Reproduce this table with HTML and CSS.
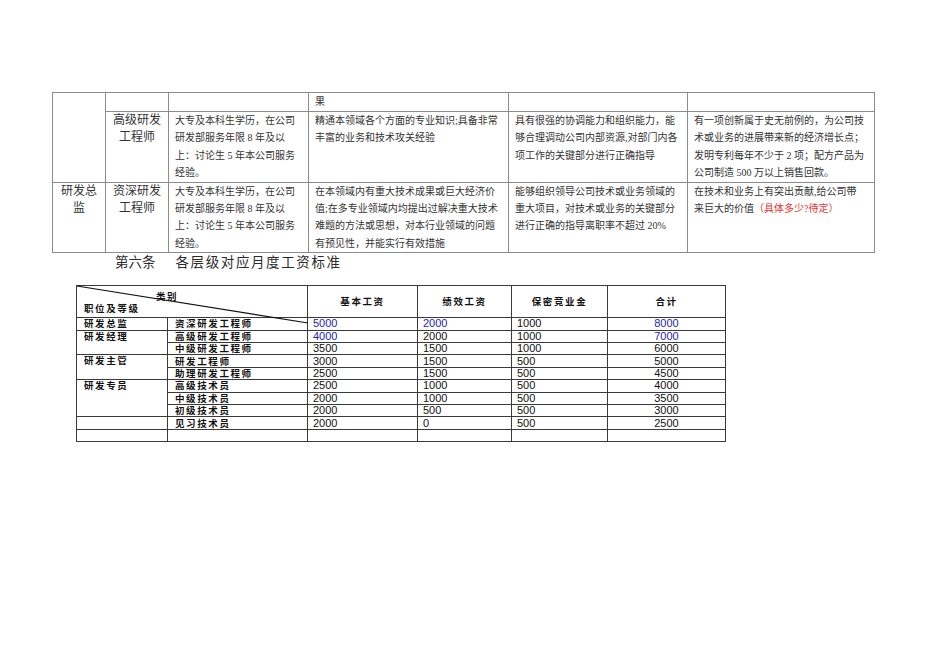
FILE: index.html
```html
<!DOCTYPE html>
<html lang="zh-CN">
<head>
<meta charset="utf-8">
<title>研发岗位等级与工资标准</title>
<link rel="stylesheet" href="styles.css">
</head>
<body>
<div class="page">
  <table class="spec">
    <colgroup>
      <col class="s1"><col class="s2"><col class="s3"><col class="s4"><col class="s5"><col class="s6">
    </colgroup>
    <tr class="r1">
      <td rowspan="2"></td><td></td><td></td><td class="txt">果</td><td></td><td></td>
    </tr>
    <tr class="r2">
      <td class="lvl">高级研发工程师</td>
      <td class="txt">大专及本科生学历，在公司<br>研发部服务年限 8 年及以<br>上：讨论生 5 年本公司服务<br>经验。</td>
      <td class="txt">精通本领域各个方面的专业知识;具备非常<br>丰富的业务和技术攻关经验</td>
      <td class="txt">具有很强的协调能力和组织能力，能<br>够合理调动公司内部资源,对部门内各<br>项工作的关键部分进行正确指导</td>
      <td class="txt">有一项创新属于史无前例的，为公司技<br>术或业务的进展带来新的经济增长点；<br>发明专利每年不少于 2 项；配方产品为<br>公司制造 500 万以上销售回款。</td>
    </tr>
    <tr class="r3">
      <td class="lvl">研发总监</td>
      <td class="lvl">资深研发工程师</td>
      <td class="txt">大专及本科生学历，在公司<br>研发部服务年限 8 年及以<br>上：讨论生 5 年本公司服务<br>经验。</td>
      <td class="txt">在本领域内有重大技术成果或巨大经济价<br>值;在多专业领域内均提出过解决重大技术<br>难题的方法或思想，对本行业领域的问题<br>有预见性，并能实行有效措施</td>
      <td class="txt">能够组织领导公司技术或业务领域的<br>重大项目，对技术或业务的关键部分<br>进行正确的指导离职率不超过 20%</td>
      <td class="txt">在技术和业务上有突出贡献,给公司带<br>来巨大的价值<span class="red">（具体多少?待定）</span></td>
    </tr>
  </table>

  <h2 class="title"><span class="art">第六条</span><span class="name">各层级对应月度工资标准</span></h2>

  <table class="pay">
    <colgroup>
      <col class="p1"><col class="p2"><col class="p3"><col class="p4"><col class="p5"><col class="p6">
    </colgroup>
    <tr class="hd">
      <th colspan="2" class="corner">
        <span class="cat">类别</span>
        <span class="pos">职位及等级</span>
        <svg class="slash" width="232" height="38" viewBox="0 0 232 38"><line x1="0" y1="0" x2="231" y2="37" stroke="#111" stroke-width="1.1"/></svg>
      </th>
      <th>基本工资</th><th>绩效工资</th><th>保密竞业金</th><th>合计</th>
    </tr>
    <tr><td class="zh grp">研发总监</td><td class="zh">资深研发工程师</td><td class="num blue">5000</td><td class="num blue">2000</td><td class="num">1000</td><td class="tot blue">8000</td></tr>
    <tr><td class="zh grp" rowspan="2">研发经理</td><td class="zh">高级研发工程师</td><td class="num blue">4000</td><td class="num">2000</td><td class="num">1000</td><td class="tot blue">7000</td></tr>
    <tr><td class="zh">中级研发工程师</td><td class="num">3500</td><td class="num">1500</td><td class="num">1000</td><td class="tot">6000</td></tr>
    <tr><td class="zh grp" rowspan="2">研发主管</td><td class="zh">研发工程师</td><td class="num">3000</td><td class="num">1500</td><td class="num">500</td><td class="tot">5000</td></tr>
    <tr><td class="zh">助理研发工程师</td><td class="num">2500</td><td class="num">1500</td><td class="num">500</td><td class="tot">4500</td></tr>
    <tr><td class="zh grp" rowspan="3">研发专员</td><td class="zh">高级技术员</td><td class="num">2500</td><td class="num">1000</td><td class="num">500</td><td class="tot">4000</td></tr>
    <tr><td class="zh">中级技术员</td><td class="num">2000</td><td class="num">1000</td><td class="num">500</td><td class="tot">3500</td></tr>
    <tr><td class="zh">初级技术员</td><td class="num">2000</td><td class="num">500</td><td class="num">500</td><td class="tot">3000</td></tr>
    <tr><td class="zh grp"></td><td class="zh">见习技术员</td><td class="num">2000</td><td class="num">0</td><td class="num">500</td><td class="tot">2500</td></tr>
    <tr><td></td><td></td><td></td><td></td><td></td><td></td></tr>
  </table>
</div>
</body>
</html>
```

FILE: styles.css
```css
html, body {
  margin: 0;
  padding: 0;
  background: #ffffff;
}

body {
  font-family: "Liberation Serif", "Noto Sans CJK SC", serif;
  color: #333333;
}

.page {
  padding: 92px 0 0 52px;
}

table {
  border-collapse: collapse;
  table-layout: fixed;
}

/* ---------- upper spec table ---------- */
.spec {
  width: 822px;
}

.s1 { width: 53px; }
.s2 { width: 63px; }
.s3 { width: 140px; }
.s4 { width: 200px; }
.s5 { width: 179px; }
.s6 { width: 187px; }

.spec td {
  border: 1px solid #8c8c8c;
  vertical-align: top;
  padding: 0 4px 0 6px;
  font-size: 10px;
  line-height: 17.4px;
  white-space: nowrap;
  overflow: hidden;
}

.spec .r1 { height: 19px; }
.spec .r2 { height: 70px; }
.spec .r3 { height: 70px; }

.spec td.lvl {
  font-size: 12px;
  text-align: center;
  white-space: normal;
  padding: 0 5px;
}

.spec .red {
  color: #e8322e;
}

/* ---------- heading ---------- */
.title {
  margin: 0;
  padding: 1px 0 0 63px;
  height: 31px;
  font-weight: normal;
  font-size: 13.5px;
  line-height: 18px;
  color: #2b2b2b;
}

.title .art {
  letter-spacing: 0;
}

.title .name {
  margin-left: 20px;
  letter-spacing: 1.6px;
}

/* ---------- pay table ---------- */
.pay {
  width: 649px;
  margin-left: 24px;
  font-family: "Liberation Sans", "Noto Sans CJK SC", sans-serif;
  color: #111111;
}

.p1 { width: 91px; }
.p2 { width: 140px; }
.p3 { width: 110px; }
.p4 { width: 94px; }
.p5 { width: 96px; }
.p6 { width: 118px; }

.pay th,
.pay td {
  border: 1px solid #3a3a3a;
  padding: 0 0 0 5px;
  font-size: 11px;
  line-height: 11px;
  height: 11.4px;
  text-align: left;
  vertical-align: middle;
  white-space: nowrap;
  color: #111111;
}

.pay .hd th {
  height: 31px;
  font-family: "Noto Sans CJK SC", sans-serif;
  font-weight: bold;
  font-size: 9.5px;
  letter-spacing: 1.6px;
  text-align: center;
  padding: 0;
}

.pay th.corner {
  position: relative;
  text-align: left;
}

.corner .cat {
  position: absolute;
  left: 79px;
  top: 5px;
}

.corner .pos {
  position: absolute;
  left: 7px;
  top: 17px;
}

.corner .slash {
  position: absolute;
  left: 0;
  top: 0;
  overflow: visible;
}

.pay td.zh {
  font-family: "Noto Sans CJK SC", sans-serif;
  font-weight: bold;
  font-size: 9.5px;
  letter-spacing: 1.6px;
  padding-left: 7px;
}

.pay td.grp {
  vertical-align: top;
}

.pay td.num {
  color: #111111;
}

.pay td.tot {
  text-align: center;
  padding: 0;
}

.pay td.blue {
  color: #1c1cb8;
}
```
